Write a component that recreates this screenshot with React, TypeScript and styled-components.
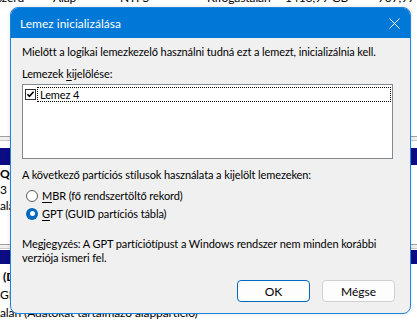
import React from "react"
import styled, { createGlobalStyle } from "styled-components"

const GlobalStyle = createGlobalStyle`
  html, body { margin: 0; padding: 0; background: #fff; }
  body { font-family: Lato, "Liberation Sans", sans-serif; color: #000; }
`

const Page = styled.div`
  position: relative;
  width: 417px;
  height: 325px;
  overflow: hidden;
  background: #fff;
  font-size: 11px;
  letter-spacing: -0.1px;
`

// --- background: disk management window behind the dialog ---

const ListRow = styled.div`
  display: grid;
  grid-template-columns: 53px 67px 87px 78px 93px 60px;
  height: 16px;
  line-height: 16px;
  margin-top: -10px;
  font-size: 12px;
  white-space: nowrap;
`

const Cell = styled.span<{ $shift?: number }>`
  margin-left: ${(p) => p.$shift ?? 0}px;
`

const Splitter = styled.div`
  height: 3px;
  border-top: 1px solid #a0a0a0;
  border-bottom: 1px solid #c8c8c8;
  background: #f0f0f0;
`

const DiskRow = styled.div<{ $before: number; $gap: number }>`
  padding-top: ${(p) => p.$before}px;
  & > ${Splitter} {
    margin-bottom: ${(p) => p.$gap}px;
  }
`

const PartitionBar = styled.div<{ $h: number }>`
  height: ${(p) => p.$h}px;
  background: #0c0c84;
`

const PartitionText = styled.div<{ $pad: number; $lh: number }>`
  padding-top: ${(p) => p.$pad}px;
  line-height: ${(p) => p.$lh}px;
  font-size: 12px;
  white-space: nowrap;
`

const Line = styled.div<{ $bold?: boolean; $indent?: number }>`
  font-weight: ${(p) => (p.$bold ? 700 : 400)};
  padding-left: ${(p) => p.$indent ?? 0}px;
`

// --- dialog ---

const Dialog = styled.div`
  position: absolute;
  left: 10px;
  top: 7px;
  width: 399px;
  height: 305px;
  border: 1px solid #1c84dc;
  border-radius: 8px;
  background: #f0f0f0;
  overflow: hidden;
  display: flex;
  flex-direction: column;
  box-shadow: 0 0 4px rgba(0, 0, 0, 0.12);
`

const TitleBar = styled.div`
  height: 30px;
  background: #0078d7;
  color: #fff;
  display: flex;
  align-items: center;
  justify-content: space-between;
  padding: 0 10px 0 9px;
  font-size: 12px;
  letter-spacing: 0;
`

const Body = styled.div`
  flex: 1;
  display: flex;
  flex-direction: column;
  padding: 6px 17px 0 11px;
`

const Text = styled.div<{ $top?: number }>`
  line-height: 15px;
  margin-top: ${(p) => p.$top ?? 0}px;
  white-space: nowrap;
`

const Note = styled.div`
  margin-top: 16px;
  width: 362px;
  line-height: 14px;
`

const Key = styled.span`
  text-decoration: underline;
  text-underline-offset: 2px;
`

const ListBox = styled.div`
  margin-top: 3px;
  height: 71px;
  border: 1px solid #828790;
  background: #fff;
  padding: 1px;
`

const ListItem = styled.div`
  display: flex;
  align-items: center;
  height: 17px;
  gap: 1px;
  padding-left: 1px;
`

const FocusLabel = styled.div`
  flex: 1;
  height: 15px;
  line-height: 15px;
  outline: 1px dotted #000;
  outline-offset: -1px;
  padding-left: 3px;
`

const Radios = styled.div`
  margin-top: 6px;
  display: flex;
  flex-direction: column;
  gap: 3px;
  padding-left: 4px;
`

const RadioRow = styled.div`
  display: flex;
  align-items: center;
  gap: 4px;
  height: 15px;
`

const RadioDot = styled.span<{ $on?: boolean }>`
  width: 12px;
  height: 12px;
  box-sizing: border-box;
  border-radius: 50%;
  background: ${(p) => (p.$on ? "#0067c0" : "#fff")};
  border: ${(p) => (p.$on ? "none" : "1px solid #5a5a5a")};
  display: flex;
  align-items: center;
  justify-content: center;
  &::after {
    content: "";
    display: ${(p) => (p.$on ? "block" : "none")};
    width: 5px;
    height: 5px;
    border-radius: 50%;
    background: #fff;
  }
`

const Buttons = styled.div`
  margin-top: auto;
  margin-bottom: 11px;
  margin-right: -2px;
  display: flex;
  justify-content: flex-end;
  gap: 12px;
`

const Button = styled.button<{ $default?: boolean }>`
  width: 73px;
  height: 22px;
  box-sizing: border-box;
  border-radius: 4px;
  border: 1px solid ${(p) => (p.$default ? "#0067c0" : "#d0d0d0")};
  background: #fdfdfd;
  font: inherit;
  font-size: 12px;
  letter-spacing: 0;
  color: #000;
  padding: 0;
`

const CheckBox = () => (
  <svg width="11" height="11" viewBox="0 0 11 11">
    <rect x="0.5" y="0.5" width="10" height="10" fill="#fff" stroke="#333" />
    <path d="M2.5 5.3 L4.4 7.4 L8.6 2.8" fill="none" stroke="#000" strokeWidth="1.6" />
  </svg>
)

const CloseIcon = () => (
  <svg width="11" height="11" viewBox="0 0 11 11">
    <path d="M0.5 0.5 L10.5 10.5 M10.5 0.5 L0.5 10.5" stroke="#fff" strokeWidth="1" />
  </svg>
)

export default function App() {
  return (
    <Page>
      <GlobalStyle />
      <ListRow>
        <Cell $shift={-22}>Egyszerű</Cell>
        <Cell>Alap</Cell>
        <Cell>NTFS</Cell>
        <Cell>Kifogástalan</Cell>
        <Cell>1416,99 GB</Cell>
        <Cell>707,97 GB</Cell>
      </ListRow>

      <DiskRow $before={130} $gap={7}>
        <Splitter />
        <PartitionBar $h={17} />
        <PartitionText $pad={1} $lh={16}>
          <Line $bold>Q:)</Line>
          <Line>3 MB</Line>
          <Line>alan</Line>
        </PartitionText>
      </DiskRow>
      <DiskRow $before={30} $gap={1}>
        <Splitter />
        <PartitionBar $h={14} />
        <PartitionText $pad={4} $lh={18}>
          <Line $bold $indent={3}>(D:)</Line>
          <Line>GB NTFS</Line>
          <Line>alan (Adatokat tartalmazó alappartíció)</Line>
        </PartitionText>
      </DiskRow>

      <Dialog>
        <TitleBar>
          <span>Lemez inicializálása</span>
          <CloseIcon />
        </TitleBar>
        <Body>
          <Text>Mielőtt a logikai lemezkezelő használni tudná ezt a lemezt, inicializálnia kell.</Text>
          <Text $top={7}>
            Lemezek <Key>k</Key>ijelölése:
          </Text>
          <ListBox>
            <ListItem>
              <CheckBox />
              <FocusLabel>Lemez 4</FocusLabel>
            </ListItem>
          </ListBox>
          <Text $top={8}>A következő partíciós stílusok használata a kijelölt lemezeken:</Text>
          <Radios>
            <RadioRow>
              <RadioDot />
              <span>
                <Key>M</Key>BR (fő rendszertöltő rekord)
              </span>
            </RadioRow>
            <RadioRow>
              <RadioDot $on />
              <span>
                <Key>G</Key>PT (GUID partíciós tábla)
              </span>
            </RadioRow>
          </Radios>
          <Note>Megjegyzés: A GPT partíciótípust a Windows rendszer nem minden korábbi verziója ismeri fel.</Note>
          <Buttons>
            <Button $default>OK</Button>
            <Button>Mégse</Button>
          </Buttons>
        </Body>
      </Dialog>
    </Page>
  )
}
